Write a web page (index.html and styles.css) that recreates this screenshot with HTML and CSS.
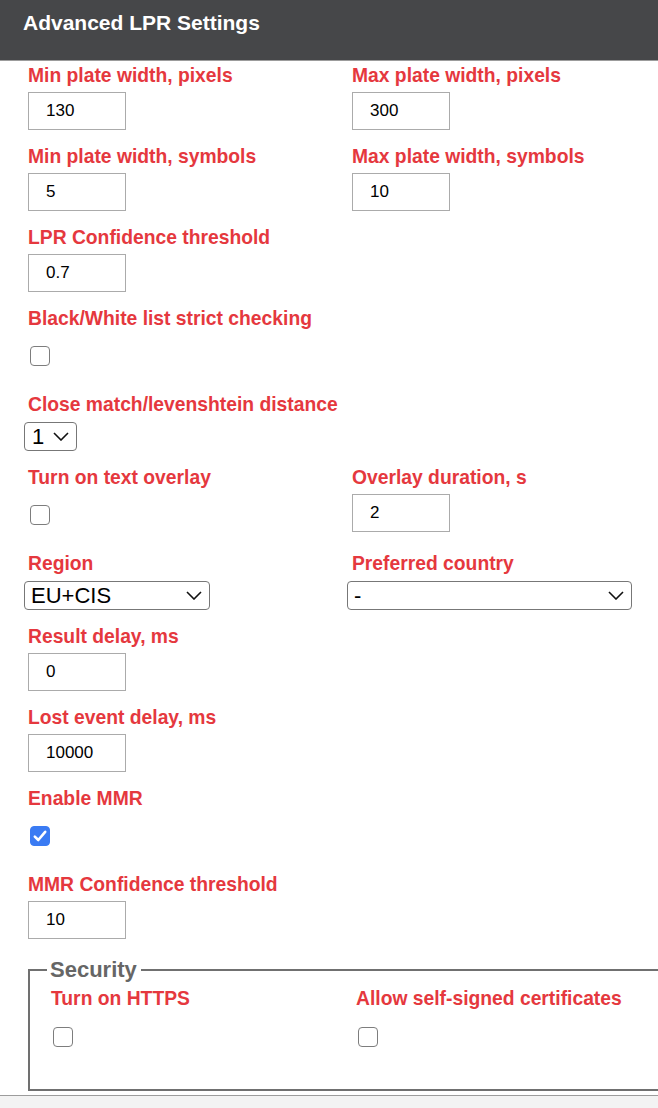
FILE: index.html
```html
<!DOCTYPE html>
<html lang="en">
<head>
<meta charset="utf-8">
<title>Advanced LPR Settings</title>
<link rel="stylesheet" href="styles.css">
</head>
<body>
<header class="topbar">
  <h1 class="title">Advanced LPR Settings</h1>
</header>
<main class="form">
  <div class="grid">
    <div class="field col-a">
      <label class="label">Min plate width, pixels</label>
      <input class="text-input" type="text" value="130">
    </div>
    <div class="field col-b">
      <label class="label">Max plate width, pixels</label>
      <input class="text-input" type="text" value="300">
    </div>

    <div class="field col-a">
      <label class="label">Min plate width, symbols</label>
      <input class="text-input" type="text" value="5">
    </div>
    <div class="field col-b">
      <label class="label">Max plate width, symbols</label>
      <input class="text-input" type="text" value="10">
    </div>

    <div class="field col-a">
      <label class="label">LPR Confidence threshold</label>
      <input class="text-input" type="text" value="0.7">
    </div>

    <div class="field col-a">
      <label class="label">Black/White list strict checking</label>
      <span class="check-wrap"><input class="check" type="checkbox"></span>
    </div>

    <div class="field col-a">
      <label class="label">Close match/levenshtein distance</label>
      <span class="select-wrap sel-small">
        <select class="select"><option>1</option></select>
        <svg class="chev" width="16" height="9" viewBox="0 0 16 9"><path d="M1 1 L8 8 L15 1" fill="none" stroke="#111" stroke-width="1.6"/></svg>
      </span>
    </div>

    <div class="field col-a">
      <label class="label">Turn on text overlay</label>
      <span class="check-wrap"><input class="check" type="checkbox"></span>
    </div>
    <div class="field col-b">
      <label class="label">Overlay duration, s</label>
      <input class="text-input" type="text" value="2">
    </div>

    <div class="field col-a">
      <label class="label">Region</label>
      <span class="select-wrap sel-region">
        <select class="select"><option>EU+CIS</option></select>
        <svg class="chev" width="16" height="9" viewBox="0 0 16 9"><path d="M1 1 L8 8 L15 1" fill="none" stroke="#111" stroke-width="1.6"/></svg>
      </span>
    </div>
    <div class="field col-b">
      <label class="label">Preferred country</label>
      <span class="select-wrap sel-country">
        <select class="select"><option>-</option></select>
        <svg class="chev" width="16" height="9" viewBox="0 0 16 9"><path d="M1 1 L8 8 L15 1" fill="none" stroke="#111" stroke-width="1.6"/></svg>
      </span>
    </div>

    <div class="field col-a">
      <label class="label">Result delay, ms</label>
      <input class="text-input" type="text" value="0">
    </div>

    <div class="field col-a">
      <label class="label">Lost event delay, ms</label>
      <input class="text-input" type="text" value="10000">
    </div>

    <div class="field col-a">
      <label class="label">Enable MMR</label>
      <span class="check-wrap">
        <input class="check" type="checkbox" checked>
        <svg class="tick" width="20" height="20" viewBox="0 0 20 20"><path d="M4.8 10.6 L8.3 14 L15.2 5.8" fill="none" stroke="#fff" stroke-width="2.6" stroke-linecap="round" stroke-linejoin="round"/></svg>
      </span>
    </div>

    <div class="field col-a">
      <label class="label">MMR Confidence threshold</label>
      <input class="text-input" type="text" value="10">
    </div>
  </div>

  <fieldset class="security">
    <legend class="legend">Security</legend>
    <div class="sec-grid">
      <div class="field">
        <label class="label">Turn on HTTPS</label>
        <span class="check-wrap sec-check"><input class="check" type="checkbox"></span>
      </div>
      <div class="field">
        <label class="label">Allow self-signed certificates</label>
        <span class="check-wrap sec-check"><input class="check" type="checkbox"></span>
      </div>
    </div>
  </fieldset>
</main>
<footer class="footer"></footer>
</body>
</html>
```
FILE: styles.css
```css
html {
  overflow: hidden;
}
body {
  margin: 0;
  font-family: "Liberation Sans", Arial, sans-serif;
  background: #fff;
  color: #000;
}
.topbar {
  height: 60px;
  background: #464749;
  border-bottom: 1px solid #9c9c9c;
  box-sizing: content-box;
}
.title {
  margin: 0;
  padding: 11px 0 0 23px;
  font-size: 21px;
  line-height: 24px;
  font-weight: bold;
  color: #fff;
}
.form {
  padding: 4px 0 0 28px;
  overflow: hidden;
}
.grid {
  display: grid;
  grid-template-columns: 324px 1fr;
}
.col-a {
  grid-column: 1;
}
.col-b {
  grid-column: 2;
}
.field {
  display: flex;
  flex-direction: column;
  align-items: flex-start;
}
.label {
  font-size: 19.3px;
  line-height: 22px;
  font-weight: bold;
  color: #e5383e;
  white-space: nowrap;
}
.text-input {
  margin: 5px 0 16px 0;
  width: 98px;
  height: 38px;
  box-sizing: border-box;
  border: 1px solid #ababab;
  border-radius: 0;
  padding: 0 0 0 17px;
  font-family: "Liberation Sans", Arial, sans-serif;
  font-size: 17px;
  color: #000;
  background: #fff;
  outline: none;
}
.check-wrap {
  position: relative;
  display: block;
  width: 20px;
  height: 20px;
  margin: 16px 0 28px 2px;
}
.check {
  appearance: none;
  -webkit-appearance: none;
  display: block;
  margin: 0;
  width: 20px;
  height: 20px;
  box-sizing: border-box;
  border: 1.7px solid #7d7d7d;
  border-radius: 4px;
  background: #fff;
}
.check:checked {
  background: #3a7bf3;
  border-color: #3a7bf3;
}
.tick {
  position: absolute;
  left: 0;
  top: 0;
}
.select-wrap {
  position: relative;
  display: block;
  margin: 6px 0 16px -4px;
  height: 29px;
}
.select {
  appearance: none;
  -webkit-appearance: none;
  display: block;
  width: 100%;
  height: 29px;
  box-sizing: border-box;
  margin: 0;
  padding: 0 0 0 6px;
  border: 1px solid #777;
  border-radius: 4px;
  background: #fff;
  font-family: "Liberation Sans", Arial, sans-serif;
  font-size: 22px;
  color: #000;
  outline: none;
}
.sel-small {
  width: 53px;
}
.sel-small .select {
  padding-left: 7px;
}
.sel-region {
  width: 186px;
}
.sel-country {
  width: 285px;
  margin-left: -5px;
}
.chev {
  position: absolute;
  right: 8px;
  top: 10px;
  pointer-events: none;
}
.security {
  margin: 3px -60px 4px 0;
  padding: 7px 0 14px 21px;
  border: 2px solid #707070;
  min-width: 0;
}
.legend {
  margin-left: -4px;
  padding: 0 4px 0 3px;
  font-size: 22px;
  line-height: 23px;
  font-weight: bold;
  color: #666;
}
.sec-grid {
  display: grid;
  grid-template-columns: 305px 1fr;
}
.sec-check {
  margin: 17px 0 28px 2px;
}
.footer {
  border-top: 1px solid #9c9c9c;
  background: #f3f3f3;
  height: 40px;
}
```
